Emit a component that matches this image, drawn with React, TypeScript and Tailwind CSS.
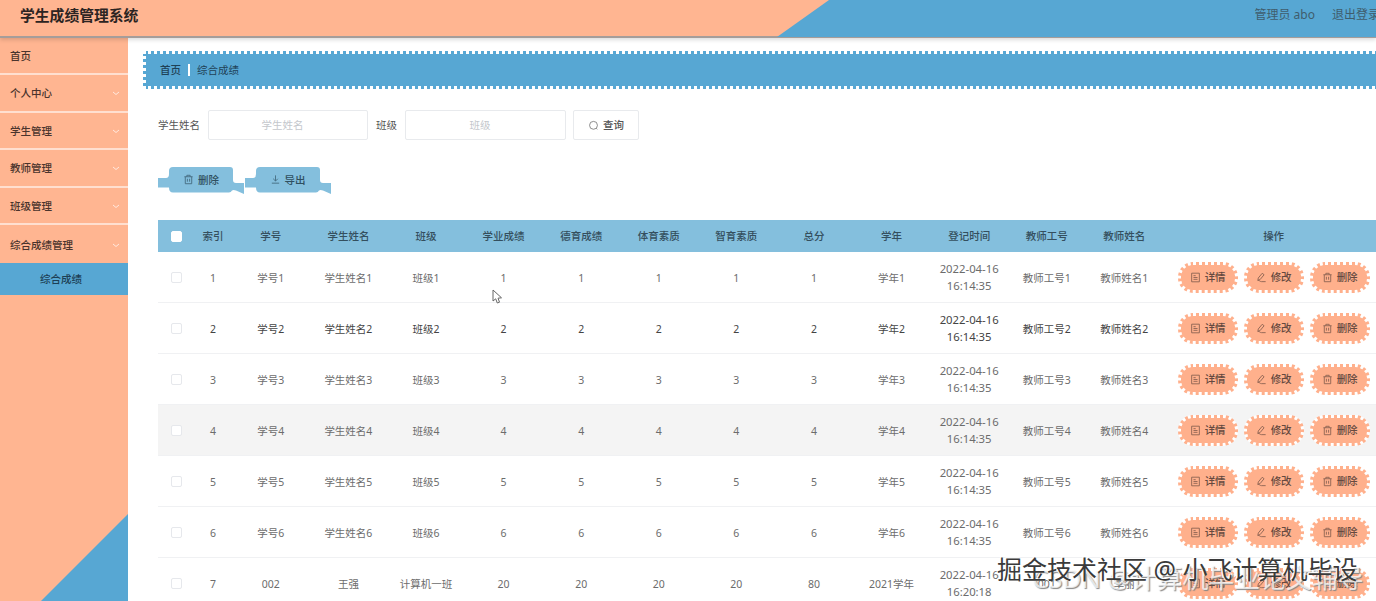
import React from "react";

type IconName = "trash" | "doc" | "edit" | "download" | "search";

const iconPaths: Record<IconName, React.ReactNode> = {
  trash: <path d="M1.5 3h9M4.2 3V1.4h3.6V3M2.5 3v7.6h7V3M4.8 5.2v3.2M7.2 5.2v3.2" />,
  doc: <path d="M1.8 1.3h8.4v9.4H1.8zM3.8 4h2.4M3.8 6h4.4M3.8 8h4.4" />,
  edit: <path d="M2 9.2l.5-2.7L6.8 1.4l2 1.6-4.3 5.2zM2 9.2c1-1 2.5 1.6 4 1.3h4.5" />,
  download: <path d="M6 1.5v6M3.5 5.2L6 7.7l2.5-2.5M2 10h8" />,
  search: <path d="M6 1.5a4.3 4.3 0 1 0 0 8.6a4.3 4.3 0 1 0 0-8.6M9 9l1.1 1.2" />,
};

const Icon: React.FC<{ name: IconName }> = ({ name }) => (
  <svg viewBox="0 0 12 12" className="h-[11px] w-[11px] shrink-0 opacity-80" fill="none" stroke="currentColor" strokeWidth="0.9">
    {iconPaths[name]}
  </svg>
);

const menu = ["个人中心", "学生管理", "教师管理", "班级管理", "综合成绩管理"];

const columns = [
  "索引", "学号", "学生姓名", "班级", "学业成绩", "德育成绩", "体育素质", "智育素质",
  "总分", "学年", "登记时间", "教师工号", "教师姓名", "操作",
];

const rows: string[][] = [1, 2, 3, 4, 5, 6].map((n) => [
  `${n}`, `学号${n}`, `学生姓名${n}`, `班级${n}`, `${n}`, `${n}`, `${n}`, `${n}`, `${n}`,
  `学年${n}`, "2022-04-16 16:14:35", `教师工号${n}`, `教师姓名${n}`,
]);
rows.push(["7", "002", "王强", "计算机一班", "20", "20", "20", "20", "80", "2021学年", "2022-04-16 16:20:18", "001", "李丽"]);

const grid = "grid w-[1226px] grid-cols-[36px_38px_repeat(12,77.6px)_221px] items-center text-center";

const Checkbox = ({ header = false }: { header?: boolean }) => (
  <span className={`mx-auto block h-[11px] w-[11px] rounded-[2px] border bg-white ${header ? "border-white" : "border-[#e6e8ec]"}`} />
);

const ActionButton = ({ icon, label }: { icon: IconName; label: string }) => (
  <button className="flex h-[31px] w-[60px] items-center justify-center gap-[4px] rounded-[15px] border-[3px] border-dotted border-white bg-[#ffb08c] text-[10.5px] font-medium text-[#65493f]">
    <Icon name={icon} />
    <span className="pt-[2px]">{label}</span>
  </button>
);

const ToolButton = ({ icon, label }: { icon: IconName; label: string }) => (
  <div className="relative h-[26px] w-[86.5px] text-[#84bfdd]">
    <svg viewBox="0 0 87 28" className="absolute left-0 top-0 h-[28px] w-[87px]" fill="currentColor">
      <path d="M0 11h8q3 0 3-4V4q0-4 4-4h57q3 0 3 3v10q0 3 3 3h8v11l-8-3.6q-3-.8-4 0q-1 2-3 2H15q-4 0-4-5H0z" />
    </svg>
    <button className="relative ml-[11px] flex h-[25px] w-[64px] items-center justify-center gap-[4px] text-[10.5px] font-medium text-[#2f4f60]">
      <Icon name={icon} />
      <span className="pt-[2px]">{label}</span>
    </button>
  </div>
);

export default function App() {
  return (
    <div className="relative h-[601px] w-[1376px] overflow-hidden bg-white font-['Noto_Sans','Noto_Sans_CJK_SC',sans-serif] text-[10.5px] text-[#6c6c6c]">
      <header className="relative z-10 h-[38px] border-b-2 border-[#9b9a9b]/90 bg-[#ffb591] shadow-[0_2px_4px_rgba(0,0,0,0.14)]">
        <div className="flex h-[36px] items-center justify-between overflow-hidden">
          <svg viewBox="0 0 600 37" className="absolute right-0 top-0 h-[37px] w-[600px]">
            <path d="M53 0H600V37H1z" fill="#57a7d3" />
          </svg>
          <h1 className="relative -mt-[5px] pl-[20px] text-[14.8px] font-bold leading-none text-[#2c2422]">学生成绩管理系统</h1>
          <div className="relative -mr-[4px] -mt-[6px] flex gap-[17px] whitespace-nowrap text-[12px] text-[#3f5d6d]">
            <span>管理员 abo</span>
            <span>退出登录</span>
          </div>
        </div>
      </header>

      <div className="flex h-[563px]">
        <aside className="relative w-[128px] shrink-0 bg-[#ffb591] font-medium text-[#4a342d]">
          <svg viewBox="0 0 87 87" className="absolute bottom-0 right-0 h-[87px] w-[87px]">
            <path d="M87 0V87H0z" fill="#57a7d3" />
          </svg>
          <div className="flex h-[37px] items-center border-b-2 border-[#ffdfd0] pl-[10px] pt-[2px]">首页</div>
          {menu.map((item, i) => (
            <div
              key={item}
              className={`flex items-center justify-between pl-[10px] pr-[8px] pt-[2px] ${i === 4 ? "h-[38px]" : "h-[37.6px] border-b-2 border-[#ffdfd0]"}`}
            >
              <span>{item}</span>
              <svg viewBox="0 0 8 5" className="h-[5px] w-[8px]" fill="none" stroke="#ffe9df">
                <path d="M1 1l3 2.5L7 1" />
              </svg>
            </div>
          ))}
          <div className="flex h-[32px] items-center bg-[#57a7d3] pl-[40px] text-[#1d3f55]">综合成绩</div>
        </aside>

        <main className="min-w-0 flex-1 overflow-hidden pl-[15px]">
          <nav className="mt-[13px] flex h-[38px] w-[1250px] items-center rounded-[3px] border-[3px] border-dotted border-white bg-[#57a7d3] pl-[14px] text-[#1f4257]">
            <span className="pt-[2px] font-medium">首页</span>
            <span className="mx-[7px] h-[12px] w-[2px] bg-white" />
            <span className="pt-[2px]">综合成绩</span>
          </nav>

          <div className="ml-[15px]">
            <div className="mt-[21px] flex h-[30px] items-center text-[#555]">
              <span className="w-[50px] pt-[2px]">学生姓名</span>
              <div className="flex h-[30px] w-[160px] items-center justify-center rounded-[2px] border border-[#e8eaed] pr-[11px] pt-[2px] text-[#c4c7cc]">学生姓名</div>
              <span className="ml-[8px] w-[29px] pt-[2px]">班级</span>
              <div className="flex h-[30px] w-[161px] items-center justify-center rounded-[2px] border border-[#e8eaed] pr-[11px] pt-[2px] text-[#c4c7cc]">班级</div>
              <button className="ml-[7px] flex h-[30px] w-[66px] items-center justify-center gap-[4px] rounded-[2px] border border-[#e8eaed] font-medium">
                <Icon name="search" />
                <span className="pt-[2px]">查询</span>
              </button>
            </div>

            <div className="mt-[27px] flex">
              <ToolButton icon="trash" label="删除" />
              <ToolButton icon="download" label="导出" />
            </div>

            <div className="mt-[27px]">
              <div className={`${grid} h-[32px] bg-[#84bfdd] font-medium text-[#344f5e]`}>
                <Checkbox header />
                {columns.map((c) => (
                  <span key={c} className="pt-[2px]">{c}</span>
                ))}
              </div>
              {rows.map((row, i) => (
                <div key={row[0]} className={`${grid} h-[51px] border-b border-[#f0f1f3] ${i === 3 ? "bg-[#f4f4f4]" : ""} ${i === 1 ? "text-[#444]" : ""}`}>
                  <Checkbox />
                  {row.map((cell, j) => (
                    <span key={j} className={j === 10 ? "px-[8px] text-[11.3px] leading-[17px]" : "pt-[2px] leading-[17px]"}>
                      {cell}
                    </span>
                  ))}
                  <div className="flex justify-center gap-[6px]">
                    <ActionButton icon="doc" label="详情" />
                    <ActionButton icon="edit" label="修改" />
                    <ActionButton icon="trash" label="删除" />
                  </div>
                </div>
              ))}
            </div>
          </div>
        </main>
      </div>

      {/* Mouse pointer */}
      <svg viewBox="0 0 12 16" className="absolute left-[492px] top-[289px] h-[16px] w-[12px]" fill="#fff" stroke="#666">
        <path d="M1 1v11l2.7-2.2L5.3 14l2.2-.8L6 9.2l3.5-.4z" />
      </svg>

      {/* Watermarks */}
      <div className="absolute left-[1032px] top-[564px] whitespace-nowrap text-[26px] leading-[28px] tracking-[-0.15px] text-white/75 [text-shadow:1px_1px_1px_#888]">CSDN @计算机毕业论文辅导</div>
      <div className="absolute left-[997px] top-[553px] whitespace-nowrap text-[25px] leading-[32px] text-[#3a3a3a] [text-shadow:-1px_-1px_0_#fff,-1px_0_0_#fff]">掘金技术社区 @ 小飞计算机毕设</div>
    </div>
  );
}
